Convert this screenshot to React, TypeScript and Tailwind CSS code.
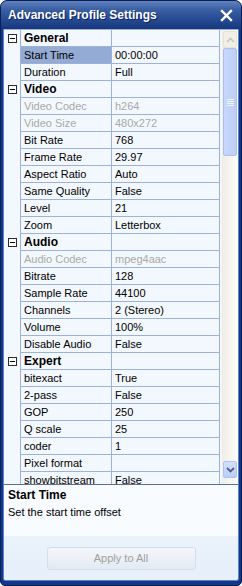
import React from "react";

type Row = {
  name: string;
  value?: string;
  header?: boolean;
  disabled?: boolean;
  selected?: boolean;
};

const rows: Row[] = [
  { name: "General", header: true },
  { name: "Start Time", value: "00:00:00", selected: true },
  { name: "Duration", value: "Full" },
  { name: "Video", header: true },
  { name: "Video Codec", value: "h264", disabled: true },
  { name: "Video Size", value: "480x272", disabled: true },
  { name: "Bit Rate", value: "768" },
  { name: "Frame Rate", value: "29.97" },
  { name: "Aspect Ratio", value: "Auto" },
  { name: "Same Quality", value: "False" },
  { name: "Level", value: "21" },
  { name: "Zoom", value: "Letterbox" },
  { name: "Audio", header: true },
  { name: "Audio Codec", value: "mpeg4aac", disabled: true },
  { name: "Bitrate", value: "128" },
  { name: "Sample Rate", value: "44100" },
  { name: "Channels", value: "2 (Stereo)" },
  { name: "Volume", value: "100%" },
  { name: "Disable Audio", value: "False" },
  { name: "Expert", header: true },
  { name: "bitexact", value: "True" },
  { name: "2-pass", value: "False" },
  { name: "GOP", value: "250" },
  { name: "Q scale", value: "25" },
  { name: "coder", value: "1" },
  { name: "Pixel format", value: "" },
  { name: "showbitstream", value: "False" },
];

function MinusBox() {
  return (
    <div className="w-[9px] h-[9px] border border-[#2b2b2b] bg-white flex items-center justify-center">
      <div className="w-[5px] h-px bg-black" />
    </div>
  );
}

function GridRow({ row }: { row: Row }) {
  return (
    <div className="flex h-[17px]">
      <div className="w-[17px] shrink-0 border-r border-[#9bb3dc] flex items-center justify-center">
        {row.header && <MinusBox />}
      </div>
      <div
        className={
          "w-[91px] shrink-0 border-r border-b border-[#9bb3dc] pl-[3px] flex items-center whitespace-nowrap overflow-hidden " +
          (row.header ? "font-bold text-[12px] text-black " : "") +
          (row.selected ? "bg-[#94abd3] " : "") +
          (row.disabled ? "text-[#a8a8a8]" : "text-black")
        }
      >
        {row.name}
      </div>
      <div
        className={
          "w-[108px] shrink-0 border-r border-b border-[#9bb3dc] pl-[3px] flex items-center whitespace-nowrap overflow-hidden " +
          (row.disabled ? "text-[#a8a8a8]" : "text-black")
        }
      >
        {row.value}
      </div>
    </div>
  );
}

function ScrollBar() {
  return (
    <div className="w-[17px] shrink-0 flex flex-col bg-[linear-gradient(to_right,#efede6,#fdfdfa)] border-l border-[#f6f5f0]">
      <div className="h-[17px] mx-px mt-px rounded-[2px] border border-[#e6e3d8] bg-[#f1efe7] flex items-center justify-center">
        <svg width="9" height="6" viewBox="0 0 9 6">
          <path d="M1 5 L4.5 1.5 L8 5" fill="none" stroke="#cac6b9" strokeWidth="1.6" />
        </svg>
      </div>
      <div className="h-[108px] mx-px rounded-[2px] border border-[#abc0ef] bg-[linear-gradient(to_right,#c7d7fc,#bccffb)] flex flex-col items-center justify-center gap-px">
        <div className="w-[7px] h-px bg-[#eef3ff]" />
        <div className="w-[7px] h-px bg-[#eef3ff]" />
        <div className="w-[7px] h-px bg-[#eef3ff]" />
        <div className="w-[7px] h-px bg-[#eef3ff]" />
      </div>
      <div className="flex-1" />
      <div className="h-[17px] mx-px mb-[6px] rounded-[2px] border border-[#aec2f1] bg-[linear-gradient(to_bottom,#d3e0fd,#bacdfa)] flex items-center justify-center">
        <svg width="9" height="6" viewBox="0 0 9 6">
          <path d="M1 1 L4.5 4.5 L8 1" fill="none" stroke="#4c5f86" strokeWidth="1.8" />
        </svg>
      </div>
    </div>
  );
}

export default function App() {
  return (
    <div
      className="w-[242px] h-[586px] flex flex-col bg-[#123786] rounded-t-[7px] rounded-b-[5px] border border-[#0a1f55] overflow-hidden text-[11px]"
      style={{ fontFamily: "Tahoma, 'Liberation Sans', Arial, sans-serif" }}
    >
      {/* title bar */}
      <div className="h-[28px] shrink-0 flex items-center justify-between pl-[7px] pr-[8px] bg-[linear-gradient(to_bottom,#6183c0,#3a5fa2_30%,#244891_70%,#17377a)]">
        <span className="text-white font-bold text-[12px] [text-shadow:1px_1px_0_#0c2360]">
          Advanced Profile Settings
        </span>
        <svg width="13" height="13" viewBox="0 0 13 13">
          <path d="M2 2 L11 11 M11 2 L2 11" stroke="white" strokeWidth="2.4" strokeLinecap="square" />
        </svg>
      </div>

      {/* body */}
      <div className="flex-1 flex flex-col mx-[2px] mb-[4px] border-x border-b border-[#5b84d0] bg-[#f6faff] rounded-b-[3px] overflow-hidden">
        <div className="h-[456px] shrink-0 flex border-t border-[#9bb3dc] border-b border-b-[#5d6f8c] bg-[#f3f8fe]">
          <div className="flex-1 overflow-hidden">
            {rows.map((r, i) => (
              <GridRow key={i} row={r} />
            ))}
          </div>
          <ScrollBar />
        </div>

        {/* description */}
        <div className="h-[51px] shrink-0 px-[4px] pt-[3px] bg-[#f8fbff]">
          <div className="font-bold text-[12px] text-black leading-[15px]">Start Time</div>
          <div className="text-black leading-[16px] mt-px">Set the start time offset</div>
        </div>

        <div className="flex-1 flex items-center justify-center bg-[linear-gradient(to_bottom,#eaf2fb,#e6effa)]">
          <button
            disabled
            className="w-[149px] h-[23px] mt-[1px] rounded-[3px] border border-[#d6dde8] bg-[linear-gradient(to_bottom,#f4f7fb,#e3eaf4)] text-[#a09f9a] text-[11px]"
          >
            Apply to All
          </button>
        </div>
      </div>
    </div>
  );
}
